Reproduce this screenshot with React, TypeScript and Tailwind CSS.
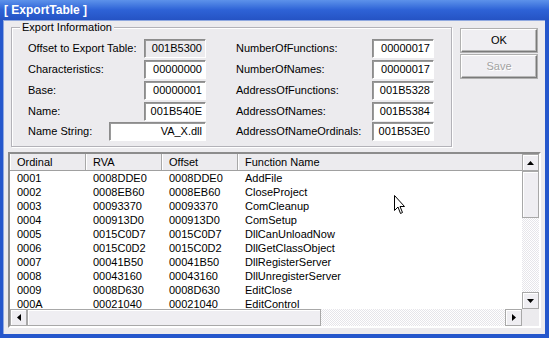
import React from 'react'

const rows = [
  ['0001', '0008DDE0', '0008DDE0', 'AddFile'],
  ['0002', '0008EB60', '0008EB60', 'CloseProject'],
  ['0003', '00093370', '00093370', 'ComCleanup'],
  ['0004', '000913D0', '000913D0', 'ComSetup'],
  ['0005', '0015C0D7', '0015C0D7', 'DllCanUnloadNow'],
  ['0006', '0015C0D2', '0015C0D2', 'DllGetClassObject'],
  ['0007', '00041B50', '00041B50', 'DllRegisterServer'],
  ['0008', '00043160', '00043160', 'DllUnregisterServer'],
  ['0009', '0008D630', '0008D630', 'EditClose'],
  ['000A', '00021040', '00021040', 'EditControl'],
]

function Field({ value, readOnly, w = 'w-[62px]' }: { value: string; readOnly?: boolean; w?: string }) {
  return (
    <div
      className={`${w} h-[19px] shrink-0 flex items-center justify-end pr-[3px] border border-t-[#8c8c8c] border-l-[#8c8c8c] border-b-white border-r-white shadow-[inset_1px_1px_0_#9a9a9a] ${
        readOnly ? 'bg-[#ecebee]' : 'bg-white'
      }`}
    >
      {value}
    </div>
  )
}

function Row({ label, value, label2, value2, readOnly }: { label: string; value: string; label2: string; value2: string; readOnly?: boolean }) {
  return (
    <div className="flex items-center h-[19px] whitespace-nowrap">
      <div className="w-[116px] shrink-0">{label}</div>
      <Field value={value} readOnly={readOnly} />
      <div className="w-[166px] shrink-0 pl-[30px]">{label2}</div>
      <Field value={value2} />
    </div>
  )
}

function SbButton({ dir }: { dir: 'up' | 'down' | 'left' | 'right' }) {
  const pts = {
    up: '0,4 7,4 3.5,0',
    down: '0,0 7,0 3.5,4',
    left: '4,0 4,7 0,3.5',
    right: '0,0 0,7 4,3.5',
  }[dir]
  const vertical = dir === 'up' || dir === 'down'
  return (
    <div className="w-[17px] h-[17px] shrink-0 flex items-center justify-center bg-[#efeef2] border border-[#a8a8a8] shadow-[inset_1px_1px_0_#ffffff]">
      <svg width={vertical ? 7 : 4} height={vertical ? 4 : 7}>
        <polygon points={pts} fill="#000" />
      </svg>
    </div>
  )
}

const track =
  'bg-[repeating-conic-gradient(#ffffff_0_25%,#e6e5ea_0_50%)] bg-[length:2px_2px]'

export default function App() {
  return (
    <div
      className="w-[549px] h-[338px] flex flex-col bg-[#2557cc] text-[11px] leading-[13px] text-black select-none"
      style={{ fontFamily: '"Liberation Sans", Arial, sans-serif' }}
    >
      <div className="h-[20px] shrink-0 flex items-center pl-[4px] bg-gradient-to-b from-[#5d92ea] via-[#2e62d6] to-[#2553c4] text-white font-bold text-[12px]">
        [ ExportTable ]
      </div>
      <div className="flex-1 flex flex-col pl-[3px] pr-[4px] pb-[4px] bg-[#2557cc]">
        <div className="flex-1 bg-[#ecebee] border-l border-t border-[#8fa8e0] flex flex-col">
          <div className="flex">
            <div className="relative mt-[6px] ml-[7px] w-[441px] h-[120px] border border-[#b3b2b8] shadow-[inset_1px_1px_0_#ffffff,1px_1px_0_#ffffff]">
              <span className="absolute -top-[7px] left-[8px] px-[2px] bg-[#ecebee]">Export Information</span>
              <div className="flex flex-col pl-[16px] pt-[11px]">
                <Row label="Offset to Export Table:" value="001B5300" readOnly label2="NumberOfFunctions:" value2="00000017" />
                <div className="mt-[2px]">
                  <Row label="Characteristics:" value="00000000" label2="NumberOfNames:" value2="00000017" />
                </div>
                <div className="mt-[2px]">
                  <Row label="Base:" value="00000001" label2="AddressOfFunctions:" value2="001B5328" />
                </div>
                <div className="mt-[2px]">
                  <Row label="Name:" value="001B540E" label2="AddressOfNames:" value2="001B5384" />
                </div>
                <div className="mt-[1px] flex items-center h-[19px] whitespace-nowrap">
                  <div className="w-[81px] shrink-0">Name String:</div>
                  <Field value="VA_X.dll" w="w-[97px]" />
                  <div className="w-[166px] shrink-0 pl-[30px]">AddressOfNameOrdinals:</div>
                  <Field value="001B53E0" />
                </div>
              </div>
            </div>
            <div className="ml-[9px] mt-[8px] flex flex-col gap-[3px]">
              <div className="w-[76px] h-[23px] flex items-center justify-center bg-[#efeef2] border border-t-white border-l-white border-b-[#7a7a7a] border-r-[#7a7a7a] shadow-[inset_-1px_-1px_0_#b8b8b8,0_0_0_1px_#b0b0b0]">
                OK
              </div>
              <div className="w-[76px] h-[23px] flex items-center justify-center bg-[#efeef2] border border-t-white border-l-white border-b-[#7a7a7a] border-r-[#7a7a7a] shadow-[inset_-1px_-1px_0_#b8b8b8,0_0_0_1px_#b0b0b0] text-[#a3a3a3] [text-shadow:1px_1px_0_#ffffff]">
                Save
              </div>
            </div>
          </div>
          <div className="relative mt-[5px] ml-[4px] w-[533px] h-[176px] border-2 border-t-[#8c8c8c] border-l-[#8c8c8c] border-b-white border-r-white bg-white flex flex-col">
            <div className="flex h-[155px]">
              <div className="w-[512px] flex flex-col overflow-hidden">
                <div className="flex h-[17px] shrink-0 bg-[#ecebee] border-b border-[#a0a0a0]">
                  {['Ordinal', 'RVA', 'Offset'].map((h) => (
                    <div key={h} className="w-[76px] flex items-center pl-[6px] border-l border-white border-r border-r-[#a8a8a8]">
                      {h}
                    </div>
                  ))}
                  <div className="flex-1 flex items-center pl-[6px] border-l border-white">Function Name</div>
                </div>
                {rows.map((r) => (
                  <div key={r[0]} className="flex h-[14px] shrink-0 items-center">
                    <div className="w-[76px] pl-[7px]">{r[0]}</div>
                    <div className="w-[76px] pl-[7px]">{r[1]}</div>
                    <div className="w-[76px] pl-[7px]">{r[2]}</div>
                    <div className="flex-1 pl-[7px]">{r[3]}</div>
                  </div>
                ))}
              </div>
              <div className="w-[17px] flex flex-col">
                <SbButton dir="up" />
                <div className="h-[47px] bg-[#efeef2] border border-[#a8a8a8] shadow-[inset_1px_1px_0_#ffffff]" />
                <div className={`flex-1 ${track}`} />
                <SbButton dir="down" />
              </div>
            </div>
            <div className="flex h-[17px]">
              <SbButton dir="left" />
              <div className="w-[294px] bg-[#efeef2] border border-[#a8a8a8] shadow-[inset_1px_1px_0_#ffffff]" />
              <div className={`w-[184px] ${track}`} />
              <SbButton dir="right" />
              <div className="w-[17px] bg-[#ecebee]" />
            </div>
            <svg className="absolute left-[384px] top-[41px]" width="12" height="20" viewBox="0 0 12 20">
              <path d="M0.5 0.5 L0.5 15.5 L4 12 L6.5 18.5 L8.5 17.5 L6 11.5 L10.5 11.5 Z" fill="#fff" stroke="#000" strokeWidth="1" />
            </svg>
          </div>
        </div>
      </div>
    </div>
  )
}
